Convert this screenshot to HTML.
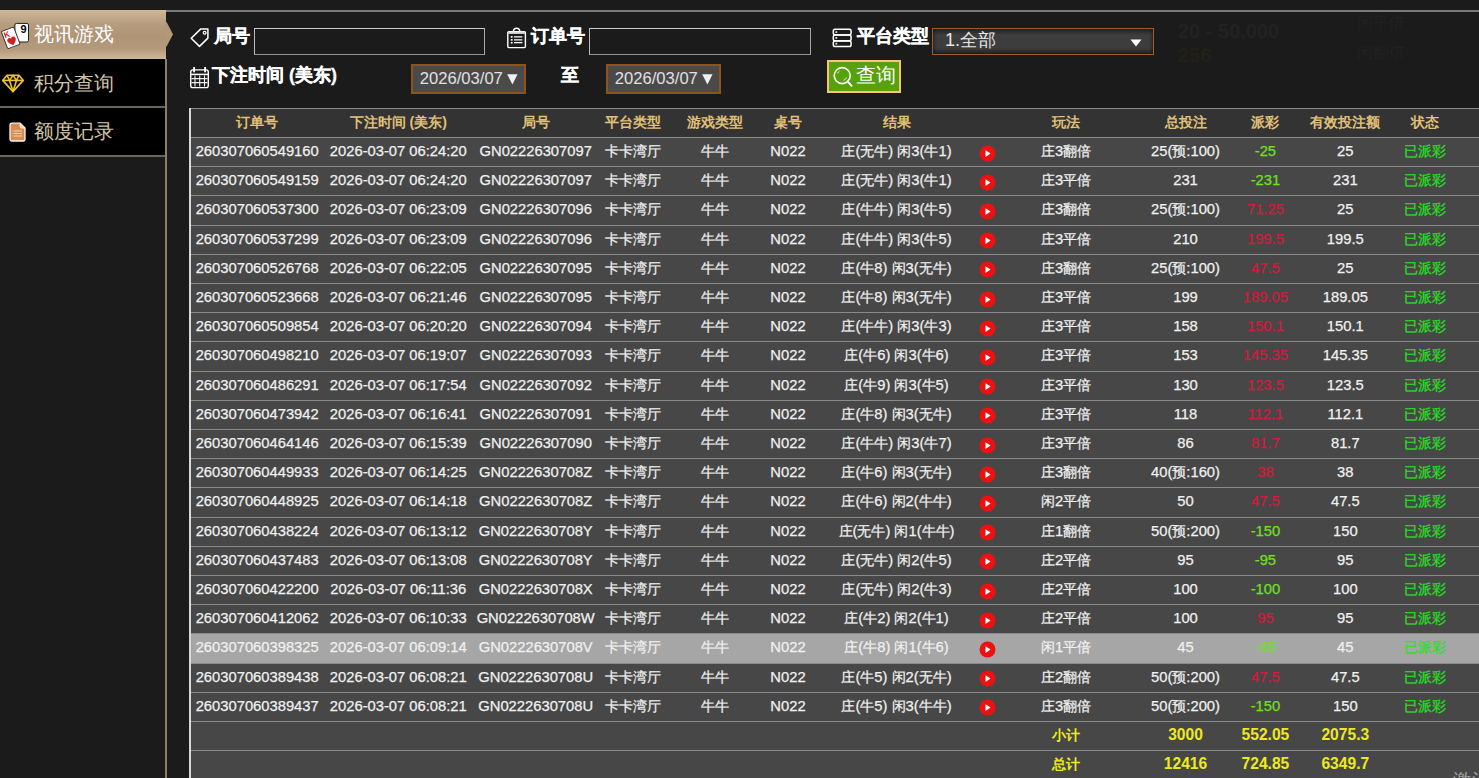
<!DOCTYPE html>
<html><head><meta charset="utf-8">
<style>
html,body{margin:0;padding:0;width:1479px;height:778px;overflow:hidden;background:#1b1b1b;font-family:"Liberation Sans",sans-serif;}
*{box-sizing:border-box}
.a{position:absolute}
/* sidebar */
#side{position:absolute;left:0;top:10px;width:166px;height:768px;}
.si{position:absolute;left:0;width:165px;height:48px;background:#000;color:#d2c4aa;font-size:20px;}
.si .t{position:absolute;left:34px;top:12.5px;line-height:22px;white-space:nowrap}
.si.on{width:166px;height:49px;background:linear-gradient(180deg,#cfb797 0%,#b69c7e 30%,#af9475 55%,#b49a7c 80%,#cfb898 100%);color:#fff}
.sep{position:absolute;left:0;width:166px;height:2px;background:#6c655b}
#vline{position:absolute;left:165px;top:59px;width:1.6px;height:719px;background:#8d7d6b}
#topline{position:absolute;left:166px;top:10px;width:1313px;height:1.5px;background:#7a7a7a}
/* filters */
.lab{position:absolute;color:#fff;font-weight:bold;font-size:18px;line-height:20px;white-space:nowrap;-webkit-text-stroke:0.3px #fff}
.inp{position:absolute;border:1px solid;border-color:#cdcdcd #a8a8a8 #959595 #bdbdbd;background:transparent}
.sel{position:absolute;border:1.5px solid #9a5e26;background:linear-gradient(180deg,#2a2a2a,#3d3d3d 25%,#3d3d3d 75%,#2a2a2a);box-shadow:inset 0 0 4px #111}
.sel .t{position:absolute;left:12px;top:1px;color:#e6e6e6;font-size:18px;line-height:20px}
.date{position:absolute;border:2px solid #8c531d;background:#4a4a4a;color:#e0e0e0;font-size:16.6px;line-height:25px;white-space:nowrap}
.date .d{position:absolute;left:6.8px;top:0}
.date .ar{position:absolute;left:93.5px;top:7.5px}
.btn{position:absolute;border:2px solid #f6c47c;background:#57a20c;color:#fff;font-size:20px;line-height:28px;white-space:nowrap}
/* table */
#tbl{position:absolute;left:189px;top:107.8px;width:1290px;height:671px;}
#tblborder{position:absolute;left:189px;top:107.8px;width:1.5px;height:671px;background:#d8d8d8}
.row{position:absolute;left:189px;width:1290px;height:29.2px;border-top:1px solid #8a8a8a}
.hd{background:#333;color:#e1c077;font-weight:bold;border-top:1.5px solid #8c8c8c}
.dt{background:#474747;color:#f0f0f0}
.dt .c{-webkit-text-stroke:0.25px currentColor}
.dt.hl{background:#a6a6a6}
.sm{background:#474747;color:#eeea1c;font-weight:bold}
.sm .c{font-size:15.6px}
.c{position:absolute;top:0;width:200px;text-align:center;font-size:14.75px;line-height:26.5px;white-space:nowrap;margin-left:-189px}
.c i{font-style:normal;font-size:14px}
.hd .c{font-size:14px;line-height:26px}
.ic{position:absolute;top:6.5px;margin-left:-189px;width:17px;height:17px}
.ic svg{display:block}
.gr{color:#6fe01c}
.rd{color:#d41a3c}
.st{color:#26e022}
</style></head><body>

<!-- faint ghost background text -->
<span class="a" style="left:1178px;top:20px;color:#222;font-size:20px;font-weight:bold;white-space:nowrap">20 - 50,000</span>
<span class="a" style="left:1178px;top:44px;color:#212116;font-size:20px;font-weight:bold;white-space:nowrap">256</span>
<span class="a" style="left:1357px;top:13px;color:#212121;font-size:16px;white-space:nowrap">闲平倍</span>
<span class="a" style="left:1357px;top:43px;color:#212121;font-size:16px;white-space:nowrap">闲翻倍</span>
<div id="topline"></div>
<!-- sidebar -->
<div class="si on" style="top:10px">
  <svg class="a" style="left:0;top:4px" width="34" height="40" viewBox="0 0 34 40">
    <rect x="14.9" y="9.4" width="13.6" height="18.6" rx="1.6" fill="#fff" stroke="#1c1c1c" stroke-width="1"/>
    <text x="20.6" y="19.4" font-family="Liberation Sans" font-weight="bold" font-size="11" fill="#000">9</text>
    <g transform="translate(1.3 17.6) rotate(-20.5)">
      <rect x="0" y="0" width="13.2" height="18.4" rx="1.3" fill="#fff" stroke="#2a2a2a" stroke-width="0.9"/>
      <text x="1.2" y="7.6" font-family="Liberation Sans" font-weight="bold" font-size="8.2" fill="#d3201f">K</text>
      <path d="M2.3 11.2c0-2.6 3.4-3.4 4.4-1c1-2.4 4.4-1.6 4.4 1c0 2.6-4.4 5.6-4.4 5.6s-4.4-3-4.4-5.6z" fill="#d3201f"/>
    </g>
  </svg>
  <span class="t">视讯游戏</span>
</div>
<svg class="a" style="left:165px;top:22px" width="9" height="25" viewBox="0 0 9 25"><path d="M0 0 L1.6 0 L8 12.2 L1.6 24.4 L0 24.4 Z" fill="#b29879"/></svg>
<div class="si" style="top:59px">
  <svg class="a" style="left:1.2px;top:14.6px" width="24" height="19" viewBox="0 0 23 19"><g fill="none" stroke="#efc232" stroke-width="1.6" stroke-linejoin="round"><path d="M5.5 1.2 L17.5 1.2 L21.8 6.4 L11.5 17.6 L1.2 6.4 Z"/><path d="M1.2 6.4 L21.8 6.4"/><path d="M5.5 1.2 L8 6.4 L11.5 17.6 L15 6.4 L17.5 1.2"/><path d="M8 6.4 L11.5 1.2 L15 6.4"/></g></svg>
  <span class="t" style="top:12.5px">积分查询</span>
</div>
<div class="sep" style="top:106px"></div>
<div class="si" style="top:108px;height:47px">
  <svg class="a" style="left:9px;top:13.5px" width="17" height="20" viewBox="0 0 17 20"><path d="M3 1.2 L11.2 1.2 L16 6 L16 17 Q16 19 14 19 L3 19 Q1 19 1 17 L1 3.2 Q1 1.2 3 1.2 Z" fill="#d98c50" stroke="#fbf6f0" stroke-width="1.3" stroke-linejoin="round"/><path d="M11.2 1.2 L11.2 4.6 Q11.2 6 12.6 6 L16 6" fill="#f1d2b6" stroke="#fbf6f0" stroke-width="1"/><g stroke="#f3d3b5" stroke-width="1.1"><path d="M5 9h8M5 11.5h8M5 14h8M3.5 9h0.8M3.5 11.5h0.8M3.5 14h0.8"/></g></svg>
  <span class="t" style="top:12px">额度记录</span>
</div>
<div class="sep" style="top:154.8px"></div>
<div id="vline"></div>

<!-- filters row 1 -->
<svg class="a" style="left:189px;top:27px" width="21" height="21" viewBox="0 0 21 21"><path d="M11.6 2.1 L18.9 2.1 L18.9 11.1 L10.5 19.4 L2.2 11.3 Z" fill="none" stroke="#fff" stroke-width="1.5" stroke-linejoin="round"/><circle cx="15.6" cy="5.8" r="1.4" fill="none" stroke="#fff" stroke-width="1.2"/></svg>
<span class="lab" style="left:214px;top:26px">局号</span>
<div class="inp" style="left:254px;top:28px;width:231px;height:26.5px"></div>

<svg class="a" style="left:506px;top:26px" width="21" height="23" viewBox="0 0 21 23"><g fill="none" stroke="#fff" stroke-width="1.4" stroke-linejoin="round"><rect x="1.8" y="5.6" width="17.6" height="16" rx="1"/><path d="M7.4 5.2 Q7.6 2.2 10.6 2.2 Q13.6 2.2 13.8 5.2"/></g><path d="M2.4 6.8 H18.8" stroke="#ddd" stroke-width="2.2"/><g stroke="#fff" stroke-width="1.2"><path d="M8 10.8h8.4M8 13.8h8.4M8 16.7h8.4"/></g><g fill="#fff"><rect x="4.8" y="10" width="1.8" height="1.7"/><rect x="4.8" y="13" width="1.8" height="1.7"/><rect x="4.8" y="15.9" width="1.8" height="1.7"/></g></svg>
<span class="lab" style="left:531px;top:26px">订单号</span>
<div class="inp" style="left:589px;top:28px;width:222px;height:26.5px"></div>

<svg class="a" style="left:832px;top:28px" width="21" height="20" viewBox="0 0 21 20"><g fill="none" stroke="#fff" stroke-width="1.5"><rect x="1.3" y="1.3" width="17.8" height="5.6" rx="1.8"/><rect x="1.3" y="7.1" width="17.8" height="5.6" rx="1.8"/><rect x="1.3" y="12.9" width="17.8" height="5.6" rx="1.8"/></g><g fill="#ddd"><rect x="3.4" y="3.2" width="1.8" height="1.8"/><rect x="3.4" y="9" width="1.8" height="1.8"/><rect x="3.4" y="14.8" width="1.8" height="1.8"/></g></svg>
<span class="lab" style="left:857px;top:26px">平台类型</span>
<div class="sel" style="left:932px;top:28px;width:222px;height:26.5px"><span class="t">1.全部</span>
<svg class="a" style="left:197px;top:10px" width="12" height="8" viewBox="0 0 12 8"><path d="M0.5 0.5 L11.5 0.5 L6 7.5 Z" fill="#fff"/></svg></div>

<!-- filters row 2 -->
<svg class="a" style="left:189px;top:67px" width="21" height="22" viewBox="0 0 21 22"><rect x="1.7" y="2.9" width="17.6" height="17.7" rx="2.2" fill="none" stroke="#fff" stroke-width="1.4"/><path d="M1.7 7.4h17.6" stroke="#fff" stroke-width="1.5"/><path d="M5.1 0.8v3.8M16.1 0.8v3.8" stroke="#fff" stroke-width="1.9" stroke-linecap="round"/><g stroke="#eee" stroke-width="1.1"><path d="M6 8.6v11M10.7 8.6v11M15.5 8.6v11M2.5 11.6h16M2.5 15.6h16"/></g></svg>
<span class="lab" style="left:212px;top:65px">下注时间 (美东)</span>
<div class="date" style="left:411px;top:64px;width:115px;height:30px"><span class="d">2026/03/07</span><svg class="ar" width="11" height="11" viewBox="0 0 11 11"><path d="M0.2 0.3 L10.6 0.3 L5.4 10.4 Z" fill="#f0f0f0"/></svg></div>
<span class="lab" style="left:561px;top:65px">至</span>
<div class="date" style="left:606px;top:64px;width:115px;height:30px"><span class="d">2026/03/07</span><svg class="ar" width="11" height="11" viewBox="0 0 11 11"><path d="M0.2 0.3 L10.6 0.3 L5.4 10.4 Z" fill="#f0f0f0"/></svg></div>
<div class="btn" style="left:827px;top:60px;width:73.5px;height:33px">
<svg class="a" style="left:4px;top:4px" width="20" height="22" viewBox="0 0 20 22"><circle cx="9.2" cy="9.6" r="8" fill="none" stroke="#fff" stroke-width="1.6"/><path d="M14.5 15.4 L18.6 19.8" stroke="#fff" stroke-width="1.9" stroke-linecap="round"/><path d="M4.6 7.4 A5.2 5.2 0 0 1 6.6 4.9" fill="none" stroke="#e8f2e0" stroke-width="0.9"/><path d="M13.6 11.4 A5.2 5.2 0 0 1 10.4 14.4" fill="none" stroke="#e8f2e0" stroke-width="0.9"/></svg>
<span class="a" style="left:27px;top:-1px">查询</span></div>

<!-- table -->
<div class="row hd" style="top:107.8px"><span class="c " style="left:157.2px"><i>订单号</i></span><span class="c " style="left:298.3px"><i>下注时间</i> (<i>美东</i>)</span><span class="c " style="left:435.7px"><i>局号</i></span><span class="c " style="left:533.3px"><i>平台类型</i></span><span class="c " style="left:615.3px"><i>游戏类型</i></span><span class="c " style="left:688.0px"><i>桌号</i></span><span class="c " style="left:796.5px"><i>结果</i></span><span class="c " style="left:966.2px"><i>玩法</i></span><span class="c " style="left:1085.5px"><i>总投注</i></span><span class="c " style="left:1165.4px"><i>派彩</i></span><span class="c " style="left:1245.3px"><i>有效投注额</i></span><span class="c " style="left:1325.3px"><i>状态</i></span></div>
<div class="row dt" style="top:137.0px"><span class="c " style="left:157.2px">260307060549160</span><span class="c " style="left:298.3px">2026-03-07 06:24:20</span><span class="c " style="left:435.7px">GN02226307097</span><span class="c " style="left:533.3px"><i>卡卡湾厅</i></span><span class="c " style="left:615.3px"><i>牛牛</i></span><span class="c " style="left:688.0px">N022</span><span class="c " style="left:796.5px"><i>庄</i>(<i>无牛</i>) <i>闲</i>3(<i>牛</i>1)</span><span class="ic" style="left:978.9px"><svg class="pl" width="17" height="17" viewBox="0 0 17 17"><circle cx="8.5" cy="8.5" r="8" fill="#ee1111"/><path d="M6.5 5.2 L11.6 8.6 L6.5 12 Z" fill="#fff"/></svg></span><span class="c " style="left:966.2px"><i>庄</i>3<i>翻倍</i></span><span class="c " style="left:1085.5px">25(<i>预</i>:100)</span><span class="c gr" style="left:1165.4px">-25</span><span class="c " style="left:1245.3px">25</span><span class="c st" style="left:1325.3px"><i>已派彩</i></span></div>
<div class="row dt" style="top:166.2px"><span class="c " style="left:157.2px">260307060549159</span><span class="c " style="left:298.3px">2026-03-07 06:24:20</span><span class="c " style="left:435.7px">GN02226307097</span><span class="c " style="left:533.3px"><i>卡卡湾厅</i></span><span class="c " style="left:615.3px"><i>牛牛</i></span><span class="c " style="left:688.0px">N022</span><span class="c " style="left:796.5px"><i>庄</i>(<i>无牛</i>) <i>闲</i>3(<i>牛</i>1)</span><span class="ic" style="left:978.9px"><svg class="pl" width="17" height="17" viewBox="0 0 17 17"><circle cx="8.5" cy="8.5" r="8" fill="#ee1111"/><path d="M6.5 5.2 L11.6 8.6 L6.5 12 Z" fill="#fff"/></svg></span><span class="c " style="left:966.2px"><i>庄</i>3<i>平倍</i></span><span class="c " style="left:1085.5px">231</span><span class="c gr" style="left:1165.4px">-231</span><span class="c " style="left:1245.3px">231</span><span class="c st" style="left:1325.3px"><i>已派彩</i></span></div>
<div class="row dt" style="top:195.4px"><span class="c " style="left:157.2px">260307060537300</span><span class="c " style="left:298.3px">2026-03-07 06:23:09</span><span class="c " style="left:435.7px">GN02226307096</span><span class="c " style="left:533.3px"><i>卡卡湾厅</i></span><span class="c " style="left:615.3px"><i>牛牛</i></span><span class="c " style="left:688.0px">N022</span><span class="c " style="left:796.5px"><i>庄</i>(<i>牛牛</i>) <i>闲</i>3(<i>牛</i>5)</span><span class="ic" style="left:978.9px"><svg class="pl" width="17" height="17" viewBox="0 0 17 17"><circle cx="8.5" cy="8.5" r="8" fill="#ee1111"/><path d="M6.5 5.2 L11.6 8.6 L6.5 12 Z" fill="#fff"/></svg></span><span class="c " style="left:966.2px"><i>庄</i>3<i>翻倍</i></span><span class="c " style="left:1085.5px">25(<i>预</i>:100)</span><span class="c rd" style="left:1165.4px">71.25</span><span class="c " style="left:1245.3px">25</span><span class="c st" style="left:1325.3px"><i>已派彩</i></span></div>
<div class="row dt" style="top:224.6px"><span class="c " style="left:157.2px">260307060537299</span><span class="c " style="left:298.3px">2026-03-07 06:23:09</span><span class="c " style="left:435.7px">GN02226307096</span><span class="c " style="left:533.3px"><i>卡卡湾厅</i></span><span class="c " style="left:615.3px"><i>牛牛</i></span><span class="c " style="left:688.0px">N022</span><span class="c " style="left:796.5px"><i>庄</i>(<i>牛牛</i>) <i>闲</i>3(<i>牛</i>5)</span><span class="ic" style="left:978.9px"><svg class="pl" width="17" height="17" viewBox="0 0 17 17"><circle cx="8.5" cy="8.5" r="8" fill="#ee1111"/><path d="M6.5 5.2 L11.6 8.6 L6.5 12 Z" fill="#fff"/></svg></span><span class="c " style="left:966.2px"><i>庄</i>3<i>平倍</i></span><span class="c " style="left:1085.5px">210</span><span class="c rd" style="left:1165.4px">199.5</span><span class="c " style="left:1245.3px">199.5</span><span class="c st" style="left:1325.3px"><i>已派彩</i></span></div>
<div class="row dt" style="top:253.8px"><span class="c " style="left:157.2px">260307060526768</span><span class="c " style="left:298.3px">2026-03-07 06:22:05</span><span class="c " style="left:435.7px">GN02226307095</span><span class="c " style="left:533.3px"><i>卡卡湾厅</i></span><span class="c " style="left:615.3px"><i>牛牛</i></span><span class="c " style="left:688.0px">N022</span><span class="c " style="left:796.5px"><i>庄</i>(<i>牛</i>8) <i>闲</i>3(<i>无牛</i>)</span><span class="ic" style="left:978.9px"><svg class="pl" width="17" height="17" viewBox="0 0 17 17"><circle cx="8.5" cy="8.5" r="8" fill="#ee1111"/><path d="M6.5 5.2 L11.6 8.6 L6.5 12 Z" fill="#fff"/></svg></span><span class="c " style="left:966.2px"><i>庄</i>3<i>翻倍</i></span><span class="c " style="left:1085.5px">25(<i>预</i>:100)</span><span class="c rd" style="left:1165.4px">47.5</span><span class="c " style="left:1245.3px">25</span><span class="c st" style="left:1325.3px"><i>已派彩</i></span></div>
<div class="row dt" style="top:283.0px"><span class="c " style="left:157.2px">260307060523668</span><span class="c " style="left:298.3px">2026-03-07 06:21:46</span><span class="c " style="left:435.7px">GN02226307095</span><span class="c " style="left:533.3px"><i>卡卡湾厅</i></span><span class="c " style="left:615.3px"><i>牛牛</i></span><span class="c " style="left:688.0px">N022</span><span class="c " style="left:796.5px"><i>庄</i>(<i>牛</i>8) <i>闲</i>3(<i>无牛</i>)</span><span class="ic" style="left:978.9px"><svg class="pl" width="17" height="17" viewBox="0 0 17 17"><circle cx="8.5" cy="8.5" r="8" fill="#ee1111"/><path d="M6.5 5.2 L11.6 8.6 L6.5 12 Z" fill="#fff"/></svg></span><span class="c " style="left:966.2px"><i>庄</i>3<i>平倍</i></span><span class="c " style="left:1085.5px">199</span><span class="c rd" style="left:1165.4px">189.05</span><span class="c " style="left:1245.3px">189.05</span><span class="c st" style="left:1325.3px"><i>已派彩</i></span></div>
<div class="row dt" style="top:312.2px"><span class="c " style="left:157.2px">260307060509854</span><span class="c " style="left:298.3px">2026-03-07 06:20:20</span><span class="c " style="left:435.7px">GN02226307094</span><span class="c " style="left:533.3px"><i>卡卡湾厅</i></span><span class="c " style="left:615.3px"><i>牛牛</i></span><span class="c " style="left:688.0px">N022</span><span class="c " style="left:796.5px"><i>庄</i>(<i>牛牛</i>) <i>闲</i>3(<i>牛</i>3)</span><span class="ic" style="left:978.9px"><svg class="pl" width="17" height="17" viewBox="0 0 17 17"><circle cx="8.5" cy="8.5" r="8" fill="#ee1111"/><path d="M6.5 5.2 L11.6 8.6 L6.5 12 Z" fill="#fff"/></svg></span><span class="c " style="left:966.2px"><i>庄</i>3<i>平倍</i></span><span class="c " style="left:1085.5px">158</span><span class="c rd" style="left:1165.4px">150.1</span><span class="c " style="left:1245.3px">150.1</span><span class="c st" style="left:1325.3px"><i>已派彩</i></span></div>
<div class="row dt" style="top:341.4px"><span class="c " style="left:157.2px">260307060498210</span><span class="c " style="left:298.3px">2026-03-07 06:19:07</span><span class="c " style="left:435.7px">GN02226307093</span><span class="c " style="left:533.3px"><i>卡卡湾厅</i></span><span class="c " style="left:615.3px"><i>牛牛</i></span><span class="c " style="left:688.0px">N022</span><span class="c " style="left:796.5px"><i>庄</i>(<i>牛</i>6) <i>闲</i>3(<i>牛</i>6)</span><span class="ic" style="left:978.9px"><svg class="pl" width="17" height="17" viewBox="0 0 17 17"><circle cx="8.5" cy="8.5" r="8" fill="#ee1111"/><path d="M6.5 5.2 L11.6 8.6 L6.5 12 Z" fill="#fff"/></svg></span><span class="c " style="left:966.2px"><i>庄</i>3<i>平倍</i></span><span class="c " style="left:1085.5px">153</span><span class="c rd" style="left:1165.4px">145.35</span><span class="c " style="left:1245.3px">145.35</span><span class="c st" style="left:1325.3px"><i>已派彩</i></span></div>
<div class="row dt" style="top:370.6px"><span class="c " style="left:157.2px">260307060486291</span><span class="c " style="left:298.3px">2026-03-07 06:17:54</span><span class="c " style="left:435.7px">GN02226307092</span><span class="c " style="left:533.3px"><i>卡卡湾厅</i></span><span class="c " style="left:615.3px"><i>牛牛</i></span><span class="c " style="left:688.0px">N022</span><span class="c " style="left:796.5px"><i>庄</i>(<i>牛</i>9) <i>闲</i>3(<i>牛</i>5)</span><span class="ic" style="left:978.9px"><svg class="pl" width="17" height="17" viewBox="0 0 17 17"><circle cx="8.5" cy="8.5" r="8" fill="#ee1111"/><path d="M6.5 5.2 L11.6 8.6 L6.5 12 Z" fill="#fff"/></svg></span><span class="c " style="left:966.2px"><i>庄</i>3<i>平倍</i></span><span class="c " style="left:1085.5px">130</span><span class="c rd" style="left:1165.4px">123.5</span><span class="c " style="left:1245.3px">123.5</span><span class="c st" style="left:1325.3px"><i>已派彩</i></span></div>
<div class="row dt" style="top:399.8px"><span class="c " style="left:157.2px">260307060473942</span><span class="c " style="left:298.3px">2026-03-07 06:16:41</span><span class="c " style="left:435.7px">GN02226307091</span><span class="c " style="left:533.3px"><i>卡卡湾厅</i></span><span class="c " style="left:615.3px"><i>牛牛</i></span><span class="c " style="left:688.0px">N022</span><span class="c " style="left:796.5px"><i>庄</i>(<i>牛</i>8) <i>闲</i>3(<i>无牛</i>)</span><span class="ic" style="left:978.9px"><svg class="pl" width="17" height="17" viewBox="0 0 17 17"><circle cx="8.5" cy="8.5" r="8" fill="#ee1111"/><path d="M6.5 5.2 L11.6 8.6 L6.5 12 Z" fill="#fff"/></svg></span><span class="c " style="left:966.2px"><i>庄</i>3<i>平倍</i></span><span class="c " style="left:1085.5px">118</span><span class="c rd" style="left:1165.4px">112.1</span><span class="c " style="left:1245.3px">112.1</span><span class="c st" style="left:1325.3px"><i>已派彩</i></span></div>
<div class="row dt" style="top:429.0px"><span class="c " style="left:157.2px">260307060464146</span><span class="c " style="left:298.3px">2026-03-07 06:15:39</span><span class="c " style="left:435.7px">GN02226307090</span><span class="c " style="left:533.3px"><i>卡卡湾厅</i></span><span class="c " style="left:615.3px"><i>牛牛</i></span><span class="c " style="left:688.0px">N022</span><span class="c " style="left:796.5px"><i>庄</i>(<i>牛牛</i>) <i>闲</i>3(<i>牛</i>7)</span><span class="ic" style="left:978.9px"><svg class="pl" width="17" height="17" viewBox="0 0 17 17"><circle cx="8.5" cy="8.5" r="8" fill="#ee1111"/><path d="M6.5 5.2 L11.6 8.6 L6.5 12 Z" fill="#fff"/></svg></span><span class="c " style="left:966.2px"><i>庄</i>3<i>平倍</i></span><span class="c " style="left:1085.5px">86</span><span class="c rd" style="left:1165.4px">81.7</span><span class="c " style="left:1245.3px">81.7</span><span class="c st" style="left:1325.3px"><i>已派彩</i></span></div>
<div class="row dt" style="top:458.2px"><span class="c " style="left:157.2px">260307060449933</span><span class="c " style="left:298.3px">2026-03-07 06:14:25</span><span class="c " style="left:435.7px">GN0222630708Z</span><span class="c " style="left:533.3px"><i>卡卡湾厅</i></span><span class="c " style="left:615.3px"><i>牛牛</i></span><span class="c " style="left:688.0px">N022</span><span class="c " style="left:796.5px"><i>庄</i>(<i>牛</i>6) <i>闲</i>3(<i>无牛</i>)</span><span class="ic" style="left:978.9px"><svg class="pl" width="17" height="17" viewBox="0 0 17 17"><circle cx="8.5" cy="8.5" r="8" fill="#ee1111"/><path d="M6.5 5.2 L11.6 8.6 L6.5 12 Z" fill="#fff"/></svg></span><span class="c " style="left:966.2px"><i>庄</i>3<i>翻倍</i></span><span class="c " style="left:1085.5px">40(<i>预</i>:160)</span><span class="c rd" style="left:1165.4px">38</span><span class="c " style="left:1245.3px">38</span><span class="c st" style="left:1325.3px"><i>已派彩</i></span></div>
<div class="row dt" style="top:487.4px"><span class="c " style="left:157.2px">260307060448925</span><span class="c " style="left:298.3px">2026-03-07 06:14:18</span><span class="c " style="left:435.7px">GN0222630708Z</span><span class="c " style="left:533.3px"><i>卡卡湾厅</i></span><span class="c " style="left:615.3px"><i>牛牛</i></span><span class="c " style="left:688.0px">N022</span><span class="c " style="left:796.5px"><i>庄</i>(<i>牛</i>6) <i>闲</i>2(<i>牛牛</i>)</span><span class="ic" style="left:978.9px"><svg class="pl" width="17" height="17" viewBox="0 0 17 17"><circle cx="8.5" cy="8.5" r="8" fill="#ee1111"/><path d="M6.5 5.2 L11.6 8.6 L6.5 12 Z" fill="#fff"/></svg></span><span class="c " style="left:966.2px"><i>闲</i>2<i>平倍</i></span><span class="c " style="left:1085.5px">50</span><span class="c rd" style="left:1165.4px">47.5</span><span class="c " style="left:1245.3px">47.5</span><span class="c st" style="left:1325.3px"><i>已派彩</i></span></div>
<div class="row dt" style="top:516.6px"><span class="c " style="left:157.2px">260307060438224</span><span class="c " style="left:298.3px">2026-03-07 06:13:12</span><span class="c " style="left:435.7px">GN0222630708Y</span><span class="c " style="left:533.3px"><i>卡卡湾厅</i></span><span class="c " style="left:615.3px"><i>牛牛</i></span><span class="c " style="left:688.0px">N022</span><span class="c " style="left:796.5px"><i>庄</i>(<i>无牛</i>) <i>闲</i>1(<i>牛牛</i>)</span><span class="ic" style="left:978.9px"><svg class="pl" width="17" height="17" viewBox="0 0 17 17"><circle cx="8.5" cy="8.5" r="8" fill="#ee1111"/><path d="M6.5 5.2 L11.6 8.6 L6.5 12 Z" fill="#fff"/></svg></span><span class="c " style="left:966.2px"><i>庄</i>1<i>翻倍</i></span><span class="c " style="left:1085.5px">50(<i>预</i>:200)</span><span class="c gr" style="left:1165.4px">-150</span><span class="c " style="left:1245.3px">150</span><span class="c st" style="left:1325.3px"><i>已派彩</i></span></div>
<div class="row dt" style="top:545.8px"><span class="c " style="left:157.2px">260307060437483</span><span class="c " style="left:298.3px">2026-03-07 06:13:08</span><span class="c " style="left:435.7px">GN0222630708Y</span><span class="c " style="left:533.3px"><i>卡卡湾厅</i></span><span class="c " style="left:615.3px"><i>牛牛</i></span><span class="c " style="left:688.0px">N022</span><span class="c " style="left:796.5px"><i>庄</i>(<i>无牛</i>) <i>闲</i>2(<i>牛</i>5)</span><span class="ic" style="left:978.9px"><svg class="pl" width="17" height="17" viewBox="0 0 17 17"><circle cx="8.5" cy="8.5" r="8" fill="#ee1111"/><path d="M6.5 5.2 L11.6 8.6 L6.5 12 Z" fill="#fff"/></svg></span><span class="c " style="left:966.2px"><i>庄</i>2<i>平倍</i></span><span class="c " style="left:1085.5px">95</span><span class="c gr" style="left:1165.4px">-95</span><span class="c " style="left:1245.3px">95</span><span class="c st" style="left:1325.3px"><i>已派彩</i></span></div>
<div class="row dt" style="top:575.0px"><span class="c " style="left:157.2px">260307060422200</span><span class="c " style="left:298.3px">2026-03-07 06:11:36</span><span class="c " style="left:435.7px">GN0222630708X</span><span class="c " style="left:533.3px"><i>卡卡湾厅</i></span><span class="c " style="left:615.3px"><i>牛牛</i></span><span class="c " style="left:688.0px">N022</span><span class="c " style="left:796.5px"><i>庄</i>(<i>无牛</i>) <i>闲</i>2(<i>牛</i>3)</span><span class="ic" style="left:978.9px"><svg class="pl" width="17" height="17" viewBox="0 0 17 17"><circle cx="8.5" cy="8.5" r="8" fill="#ee1111"/><path d="M6.5 5.2 L11.6 8.6 L6.5 12 Z" fill="#fff"/></svg></span><span class="c " style="left:966.2px"><i>庄</i>2<i>平倍</i></span><span class="c " style="left:1085.5px">100</span><span class="c gr" style="left:1165.4px">-100</span><span class="c " style="left:1245.3px">100</span><span class="c st" style="left:1325.3px"><i>已派彩</i></span></div>
<div class="row dt" style="top:604.2px"><span class="c " style="left:157.2px">260307060412062</span><span class="c " style="left:298.3px">2026-03-07 06:10:33</span><span class="c " style="left:435.7px">GN0222630708W</span><span class="c " style="left:533.3px"><i>卡卡湾厅</i></span><span class="c " style="left:615.3px"><i>牛牛</i></span><span class="c " style="left:688.0px">N022</span><span class="c " style="left:796.5px"><i>庄</i>(<i>牛</i>2) <i>闲</i>2(<i>牛</i>1)</span><span class="ic" style="left:978.9px"><svg class="pl" width="17" height="17" viewBox="0 0 17 17"><circle cx="8.5" cy="8.5" r="8" fill="#ee1111"/><path d="M6.5 5.2 L11.6 8.6 L6.5 12 Z" fill="#fff"/></svg></span><span class="c " style="left:966.2px"><i>庄</i>2<i>平倍</i></span><span class="c " style="left:1085.5px">100</span><span class="c rd" style="left:1165.4px">95</span><span class="c " style="left:1245.3px">95</span><span class="c st" style="left:1325.3px"><i>已派彩</i></span></div>
<div class="row dt hl" style="top:633.4px"><span class="c " style="left:157.2px">260307060398325</span><span class="c " style="left:298.3px">2026-03-07 06:09:14</span><span class="c " style="left:435.7px">GN0222630708V</span><span class="c " style="left:533.3px"><i>卡卡湾厅</i></span><span class="c " style="left:615.3px"><i>牛牛</i></span><span class="c " style="left:688.0px">N022</span><span class="c " style="left:796.5px"><i>庄</i>(<i>牛</i>8) <i>闲</i>1(<i>牛</i>6)</span><span class="ic" style="left:978.9px"><svg class="pl" width="17" height="17" viewBox="0 0 17 17"><circle cx="8.5" cy="8.5" r="8" fill="#ee1111"/><path d="M6.5 5.2 L11.6 8.6 L6.5 12 Z" fill="#fff"/></svg></span><span class="c " style="left:966.2px"><i>闲</i>1<i>平倍</i></span><span class="c " style="left:1085.5px">45</span><span class="c gr" style="left:1165.4px">-45</span><span class="c " style="left:1245.3px">45</span><span class="c st" style="left:1325.3px"><i>已派彩</i></span></div>
<div class="row dt" style="top:662.6px"><span class="c " style="left:157.2px">260307060389438</span><span class="c " style="left:298.3px">2026-03-07 06:08:21</span><span class="c " style="left:435.7px">GN0222630708U</span><span class="c " style="left:533.3px"><i>卡卡湾厅</i></span><span class="c " style="left:615.3px"><i>牛牛</i></span><span class="c " style="left:688.0px">N022</span><span class="c " style="left:796.5px"><i>庄</i>(<i>牛</i>5) <i>闲</i>2(<i>无牛</i>)</span><span class="ic" style="left:978.9px"><svg class="pl" width="17" height="17" viewBox="0 0 17 17"><circle cx="8.5" cy="8.5" r="8" fill="#ee1111"/><path d="M6.5 5.2 L11.6 8.6 L6.5 12 Z" fill="#fff"/></svg></span><span class="c " style="left:966.2px"><i>庄</i>2<i>翻倍</i></span><span class="c " style="left:1085.5px">50(<i>预</i>:200)</span><span class="c rd" style="left:1165.4px">47.5</span><span class="c " style="left:1245.3px">47.5</span><span class="c st" style="left:1325.3px"><i>已派彩</i></span></div>
<div class="row dt" style="top:691.8px"><span class="c " style="left:157.2px">260307060389437</span><span class="c " style="left:298.3px">2026-03-07 06:08:21</span><span class="c " style="left:435.7px">GN0222630708U</span><span class="c " style="left:533.3px"><i>卡卡湾厅</i></span><span class="c " style="left:615.3px"><i>牛牛</i></span><span class="c " style="left:688.0px">N022</span><span class="c " style="left:796.5px"><i>庄</i>(<i>牛</i>5) <i>闲</i>3(<i>牛牛</i>)</span><span class="ic" style="left:978.9px"><svg class="pl" width="17" height="17" viewBox="0 0 17 17"><circle cx="8.5" cy="8.5" r="8" fill="#ee1111"/><path d="M6.5 5.2 L11.6 8.6 L6.5 12 Z" fill="#fff"/></svg></span><span class="c " style="left:966.2px"><i>庄</i>3<i>翻倍</i></span><span class="c " style="left:1085.5px">50(<i>预</i>:200)</span><span class="c gr" style="left:1165.4px">-150</span><span class="c " style="left:1245.3px">150</span><span class="c st" style="left:1325.3px"><i>已派彩</i></span></div>
<div class="row sm" style="top:721.0px"><span class="c " style="left:966.2px"><i>小计</i></span><span class="c " style="left:1085.5px">3000</span><span class="c " style="left:1165.4px">552.05</span><span class="c " style="left:1245.3px">2075.3</span></div>
<div class="row sm" style="top:750.2px"><span class="c " style="left:966.2px"><i>总计</i></span><span class="c " style="left:1085.5px">12416</span><span class="c " style="left:1165.4px">724.85</span><span class="c " style="left:1245.3px">6349.7</span></div>
<div id="tblborder"></div>
<span class="a" style="left:1453px;top:768px;color:#a0a0a0;font-size:19px;white-space:nowrap">激活 Windows</span>

</body></html>
